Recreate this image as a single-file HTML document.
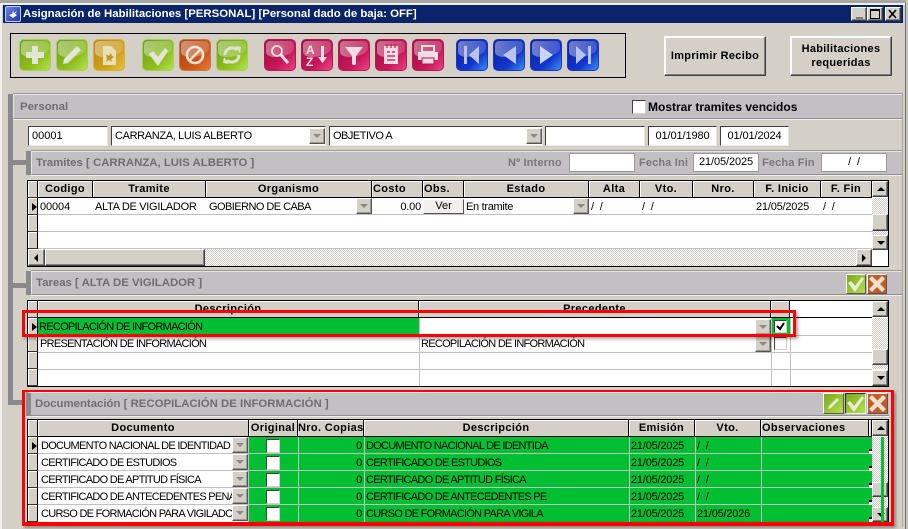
<!DOCTYPE html>
<html><head><meta charset="utf-8"><style>
html,body{margin:0;padding:0}
body{width:908px;height:529px;position:relative;overflow:hidden;background:#d4d0c8;font-family:"Liberation Sans",sans-serif;font-size:11px;color:#000}
div,span,svg{position:absolute;box-sizing:border-box}
.t{white-space:nowrap;line-height:16px;height:16px}
.grid .t{line-height:18px;height:18px;letter-spacing:-.72px}
.grid .d{letter-spacing:-.2px;word-spacing:3px}
.ib{width:32px;height:32px;border-radius:5px;border:1px solid;overflow:hidden;top:39px}
.ib:before{content:"";position:absolute;left:1px;top:1px;right:1px;height:16px;border-radius:4px 4px 70% 30%/4px 4px 9px 5px;background:linear-gradient(100deg,rgba(255,255,255,.42),rgba(255,255,255,.16))}
.ib svg{left:-1px;top:-1px;width:32px;height:32px}
.g{background:linear-gradient(135deg,#6f9c16,#8fc020 65%,#b6e24e);border-color:#a6d050}
.y{background:linear-gradient(135deg,#b8860f,#cfa21a 65%,#e6c640);border-color:#d8b040}
.o{background:linear-gradient(135deg,#a84414,#cf5618 65%,#ea7a38);border-color:#c87848}
.p{background:linear-gradient(135deg,#a00a40,#c8185a 65%,#ee4488);border-color:#b81850}
.b{background:linear-gradient(135deg,#0a1ea0,#1236cc 65%,#3a92f2);border-color:#1838c0}
.btn{background:#d4d0c8;border:1px solid;border-color:#fff #404040 #404040 #fff;box-shadow:inset -1px -1px 0 #808080,inset 1px 1px 0 #fff;font-weight:bold;text-align:center;font-size:11px;letter-spacing:.3px}
.hd{background:#c3c0c3;border-top:1px solid #e8e6e2;border-left:1px solid #e8e6e2;border-bottom:1px solid #8f8f8f;box-shadow:0 -1px 0 #9a9a9a,0 1px 0 #f0eeea}
.lb{font-weight:bold;color:#6e6e6e;font-size:11.4px;line-height:16px;white-space:nowrap}
.lb2{font-weight:bold;color:#777;font-size:11px;line-height:16px;white-space:nowrap;letter-spacing:.15px}
.in{background:#fff;border:1px solid;border-color:#404040 #e8e6e2 #e8e6e2 #404040;height:20px;top:126px;line-height:18px;white-space:nowrap;padding-left:3px;font-size:11px;overflow:hidden}
.in2{background:#fff;border:1px solid #999;height:19px;top:153px;line-height:17px;text-align:center;font-size:11px;letter-spacing:-.1px}
.dd{width:16px;height:16px;background:#d4d0c8;border:1px solid;border-color:#fff #555 #555 #fff;box-shadow:inset -1px -1px 0 #999}
.dd:after{content:"";position:absolute;left:3px;top:5px;border-left:4px solid transparent;border-right:4px solid transparent;border-top:4px solid #8a8a8a}
.grid{background:#fff;border:1px solid #000;left:27px;width:862px}
.hc{background:#d4d0c8;border-right:1px solid #000;border-bottom:1px solid #000;box-shadow:inset 1px 1px 0 #fff;font-weight:bold;text-align:center;line-height:16px;height:17px;top:0;letter-spacing:.35px;white-space:nowrap;overflow:hidden}
.ind{background:#d4d0c8;left:0;width:10px;border-right:1px solid #000;border-bottom:1px solid #333;box-shadow:inset 1px 1px 0 #fff;height:17px}
.arr{border-left:5px solid #000;border-top:4px solid transparent;border-bottom:4px solid transparent;left:4px;top:5px;width:0;height:0}
.rl{left:10px;height:1px;background:#c0c0c0}
.vl{width:1px;background:#c0c0c0}
.sb{background:#d4d0c8;border:1px solid;border-color:#fff #404040 #404040 #fff;box-shadow:inset -1px -1px 0 #808080}
.dth{background:repeating-conic-gradient(#cfcbc3 0 25%,#fff 0 50%) 0 0/2px 2px}
.up:after{content:"";position:absolute;left:4px;top:5px;border-left:4px solid transparent;border-right:4px solid transparent;border-bottom:4px solid #000}
.dn:after{content:"";position:absolute;left:4px;top:5px;border-left:4px solid transparent;border-right:4px solid transparent;border-top:4px solid #000}
.cb{width:14px;height:14px;background:#fff;border:1px solid;border-color:#404040 #d4d0c8 #d4d0c8 #404040}
.red{border:3px solid #f00;box-shadow:2px 2px 3px rgba(0,0,0,.35)}
.gr{background:#00bf33}
.sm{width:20px;height:20px;border:1px solid;border-color:#fff #555 #555 #fff;overflow:hidden}
</style></head><body>

<!-- window frame -->
<div style="left:0;top:0;width:908px;height:3px;background:#a8a6a0"></div>
<div style="left:0;top:3px;width:908px;height:2px;background:#f2f0ec"></div>
<div style="left:0;top:3px;width:2px;height:526px;background:#f2f0ec"></div>
<div style="left:905px;top:3px;width:1px;height:526px;background:#6e6e6e"></div>
<div style="left:906px;top:0;width:2px;height:529px;background:#c8c6c0"></div>

<!-- title bar -->
<div style="left:3px;top:5px;width:900px;height:18px;background:#0a246a"></div>
<div style="left:5px;top:6px;width:16px;height:16px;background:linear-gradient(135deg,#6a88e0,#1c34b8);border:1px solid #c8d0f0;border-radius:2px">
<svg width="14" height="14" viewBox="0 0 14 14" style="left:0;top:0"><path d="M3 8l4 3 4-3-2-1 2-3-3 2-1-2-1 3z" fill="#fff"/></svg></div>
<div class="t" style="left:23px;top:6px;color:#fff;font-weight:bold;font-size:11.4px">Asignación de Habilitaciones [PERSONAL] [Personal dado de baja: OFF]</div>
<div class="sb" style="left:851px;top:7px;width:16px;height:14px"><div style="left:4px;top:9px;width:7px;height:2px;background:#808080"></div></div>
<div class="sb" style="left:867px;top:7px;width:16px;height:14px"><div style="left:2px;top:1px;width:10px;height:10px;border:1px solid #000;border-top-width:2px"></div></div>
<div class="sb" style="left:885px;top:7px;width:16px;height:14px"><svg width="14" height="12" style="left:0;top:0"><path d="M3 2l7 8M10 2l-7 8" stroke="#000" stroke-width="1.6"/></svg></div>

<!-- toolbar -->
<div style="left:10px;top:33px;width:616px;height:45px;border:1px solid #000"></div>

<div class="ib g" style="left:19px"><svg viewBox="0 0 32 32"><path d="M13 7h6v6h6v6h-6v6h-6v-6H7v-6h6z" fill="#e2e6d6"/></svg></div>
<div class="ib g" style="left:56px"><svg viewBox="0 0 32 32"><path d="M21 7l4 4-13 13-5 1 1-5z" fill="#e2e6d6"/></svg></div>
<div class="ib y" style="left:93px"><svg viewBox="0 0 32 32"><path d="M10 7h8l5 5v14H10z" fill="#e8e0b8"/><path d="M13 15l3 2 2-3 1 3 2 1-3 2 1 3-3-2-3 2 1-3z" fill="#c8961e"/></svg></div>

<div class="ib g" style="left:142px"><svg viewBox="0 0 32 32"><path d="M7 15l4-3 5 6 7-9 3 3-10 15z" fill="#e2e6d6"/></svg></div>
<div class="ib o" style="left:179px"><svg viewBox="0 0 32 32"><circle cx="16" cy="16" r="8" fill="none" stroke="#ece2d4" stroke-width="2.6"/><path d="M11 21l10-10" stroke="#ece2d4" stroke-width="2.6"/></svg></div>
<div class="ib g" style="left:216px"><svg viewBox="0 0 32 32"><path d="M9 16a7 7 0 0 1 12-5" fill="none" stroke="#dfe4d0" stroke-width="3"/><path d="M23 16a7 7 0 0 1-12 5" fill="none" stroke="#dfe4d0" stroke-width="3"/><path d="M19 7l6 1-1 6zM13 25l-6-1 1-6z" fill="#dfe4d0"/></svg></div>

<div class="ib p" style="left:264px"><svg viewBox="0 0 32 32"><circle cx="13" cy="12" r="5" fill="none" stroke="#f0e0e6" stroke-width="1.8"/><path d="M17 16l7 8" stroke="#f0e0e6" stroke-width="3"/></svg></div>
<div class="ib p" style="left:301px"><svg viewBox="0 0 32 32"><text x="5" y="15" font-family="Liberation Sans" font-weight="bold" font-size="12" fill="#f0e0e6">A</text><text x="5" y="27" font-family="Liberation Sans" font-weight="bold" font-size="12" fill="#f0e0e6">Z</text><path d="M20 7h3v11h3l-4.500 6-4.500-6h3z" fill="#f0e0e6"/></svg></div>
<div class="ib p" style="left:338px"><svg viewBox="0 0 32 32"><path d="M7 8h18l-7 9v8l-1 1h-2l-1-1v-8z" fill="#f0dce4"/></svg></div>
<div class="ib p" style="left:375px"><svg viewBox="0 0 32 32"><path d="M9 7h14v18H9z" fill="#f0dce4"/><path d="M12 5v4M16 5v4M20 5v4M12 13h3M17 13h3M12 17h8M12 21h8" stroke="#c01450" stroke-width="1.200"/></svg></div>
<div class="ib p" style="left:412px"><svg viewBox="0 0 32 32"><path d="M10 7h12v6H10z" fill="none" stroke="#f0dce4" stroke-width="2"/><path d="M6 13h20v8H6z" fill="#f0dce4"/><path d="M10 19h12v6H10z" fill="#f0dce4" stroke="#c01450"/></svg></div>

<div class="ib b" style="left:456px"><svg viewBox="0 0 32 32"><path d="M8 7h3v18H8z" fill="#b8c4e8"/><path d="M23 7v18L13 16z" fill="#b8c4e8"/></svg></div>
<div class="ib b" style="left:493px"><svg viewBox="0 0 32 32"><path d="M23 7v18L10 16z" fill="#b8c4e8"/></svg></div>
<div class="ib b" style="left:530px"><svg viewBox="0 0 32 32"><path d="M10 7v18l13-9z" fill="#c8d4f0"/></svg></div>
<div class="ib b" style="left:567px"><svg viewBox="0 0 32 32"><path d="M9 7v18l10-9z" fill="#b8c4e8"/><path d="M21 7h3v18h-3z" fill="#b8c4e8"/></svg></div>

<!-- top buttons -->
<div class="btn" style="left:664px;top:36px;width:102px;height:40px;line-height:38px">Imprimir Recibo</div>
<div class="btn" style="left:790px;top:36px;width:102px;height:40px;line-height:14px;padding-top:5px">Habilitaciones<br>requeridas</div>

<!-- left tree bars -->
<div style="left:8px;top:94px;width:5px;height:311px;background:#8a8a8a"></div>
<div style="left:13px;top:160px;width:18px;height:5px;background:#8a8a8a"></div>
<div style="left:13px;top:283px;width:18px;height:5px;background:#8a8a8a"></div>
<div style="left:8px;top:400px;width:16px;height:5px;background:#8a8a8a"></div>
<div style="left:902px;top:93px;width:1px;height:434px;background:#a8a6a0"></div>

<!-- Personal -->
<div class="hd" style="left:13px;top:94px;width:889px;height:25px"></div>
<div class="lb" style="left:20px;top:99px">Personal</div>
<div class="cb" style="left:632px;top:100px"></div>
<div class="t" style="left:648px;top:99px;font-weight:bold;font-size:12px">Mostrar tramites vencidos</div>

<div class="in" style="left:28px;width:80px">00001</div>
<div class="in" style="left:111px;width:215px;letter-spacing:-.35px">CARRANZA, LUIS ALBERTO</div>
<div class="dd" style="left:309px;top:128px"></div>
<div class="in" style="left:329px;width:214px;letter-spacing:-.5px">OBJETIVO A</div>
<div class="dd" style="left:526px;top:128px"></div>
<div class="in" style="left:545px;width:100px"></div>
<div class="in" style="left:648px;width:69px;text-align:center;padding:0;letter-spacing:-.1px">01/01/1980</div>
<div class="in" style="left:720px;width:69px;text-align:center;padding:0;letter-spacing:-.1px">01/01/2024</div>

<!-- Tramites -->
<div style="left:26px;top:151px;width:5px;height:24px;background:#8a8a8a"></div>
<div class="hd" style="left:31px;top:151px;width:871px;height:24px"></div>
<div class="lb" style="left:36px;top:155px">Tramites [ CARRANZA, LUIS ALBERTO ]</div>
<div class="lb2" style="left:508px;top:155px">Nº Interno</div>
<div class="in2" style="left:569px;width:66px"></div>
<div class="lb2" style="left:639px;top:155px">Fecha Ini</div>
<div class="in2" style="left:693px;width:66px">21/05/2025</div>
<div class="lb2" style="left:762px;top:155px">Fecha Fin</div>
<div class="in2" style="left:821px;width:66px;word-spacing:3px">/ /</div>

<!-- Grid 1 -->
<div class="grid" style="top:180px;height:87px">
  <div class="ind" style="top:0"></div>
  <div class="hc" style="left:10px;width:55px">Codigo</div>
  <div class="hc" style="left:65px;width:113px">Tramite</div>
  <div class="hc" style="left:178px;width:166px">Organismo</div>
  <div class="hc" style="left:344px;width:51px;text-align:left;padding-left:1px">Costo</div>
  <div class="hc" style="left:395px;width:41px;text-align:left;padding-left:1px">Obs.</div>
  <div class="hc" style="left:436px;width:125px">Estado</div>
  <div class="hc" style="left:561px;width:51px">Alta</div>
  <div class="hc" style="left:612px;width:53px">Vto.</div>
  <div class="hc" style="left:665px;width:61px">Nro.</div>
  <div class="hc" style="left:726px;width:67px">F. Inicio</div>
  <div class="hc" style="left:793px;width:51px">F. Fin</div>
  <div class="ind" style="top:17px"><div class="arr"></div></div>
  <div class="ind" style="top:34px"></div>
  <div class="ind" style="top:51px"></div>
  <div class="rl" style="top:33px;width:834px"></div>
  <div class="rl" style="top:50px;width:834px"></div>
  <div class="rl" style="top:67px;width:834px"></div>
  <div class="t" style="left:12px;top:17px;letter-spacing:-.1px">00004</div>
  <div class="t" style="left:67px;top:17px;letter-spacing:-.3px">ALTA DE VIGILADOR</div>
  <div class="t" style="left:181px;top:17px;letter-spacing:-.55px">GOBIERNO DE CABA</div>
  <div class="dd" style="left:328px;top:17px"></div>
  <div class="t d" style="left:344px;top:17px;width:49px;text-align:right">0.00</div>
  <div class="sb" style="left:395px;top:18px;width:41px;height:15px;line-height:13px;text-align:center;box-shadow:none;background:#f2f0ec;border-color:#fff #555 #555 #fff">Ver</div>
  <div class="t" style="left:438px;top:17px;letter-spacing:-.3px">En tramite</div>
  <div class="dd" style="left:545px;top:17px"></div>
  <div class="t d" style="left:563px;top:17px">/ /</div>
  <div class="t d" style="left:614px;top:17px">/ /</div>
  <div class="t d" style="left:728px;top:17px">21/05/2025</div>
  <div class="t d" style="left:795px;top:17px">/ /</div>
  <div class="dth" style="left:0;top:68px;width:860px;height:17px"></div>
  <div class="sb" style="left:0;top:68px;width:17px;height:17px"><div style="left:5px;top:4px;border-right:4px solid #000;border-top:4px solid transparent;border-bottom:4px solid transparent"></div></div>
  <div class="sb" style="left:17px;top:68px;width:160px;height:17px"></div>
  <div class="sb" style="left:828px;top:68px;width:16px;height:17px"><div style="left:5px;top:4px;border-left:4px solid #000;border-top:4px solid transparent;border-bottom:4px solid transparent"></div></div>
  <div class="dth" style="left:844px;top:17px;width:16px;height:51px"></div>
  <div class="sb up" style="left:844px;top:0;width:16px;height:16px"></div>
  <div class="sb" style="left:844px;top:33px;width:16px;height:17px"></div>
  <div class="sb dn" style="left:844px;top:54px;width:16px;height:15px"></div>
  <div style="left:844px;top:69px;width:16px;height:16px;background:#fff"></div>
</div>

<!-- Tareas -->
<div style="left:26px;top:271px;width:5px;height:24px;background:#8a8a8a"></div>
<div class="hd" style="left:31px;top:271px;width:871px;height:24px"></div>
<div class="lb" style="left:36px;top:275px">Tareas [ ALTA DE VIGILADOR ]</div>
<div class="sm" style="left:846px;top:274px;background:linear-gradient(135deg,#7aa81c,#b8e048)"><svg width="18" height="18" viewBox="0 0 18 18" style="left:0;top:0"><path d="M1 8l3-2 4 5 7-9 2 2-9 13z" fill="#e6ecd8"/></svg></div>
<div class="sm" style="left:867px;top:274px;background:#c85a20"><svg width="18" height="18" viewBox="0 0 18 18" style="left:0;top:0"><path d="M4 1l5 5 5-5 3 3-5 5 5 5-3 3-5-5-5 5-3-3 5-5-5-5z" fill="#ece0d4"/></svg></div>

<!-- Grid 2 -->
<div class="grid" style="top:300px;height:87px">
  <div class="ind" style="top:0"></div>
  <div class="hc" style="left:10px;width:381px">Descripción</div>
  <div class="hc" style="left:391px;width:352px">Precedente</div>
  <div class="hc" style="left:743px;width:19px"></div>
  <div class="ind" style="top:17px"><div class="arr"></div></div>
  <div class="ind" style="top:34px"></div>
  <div class="ind" style="top:51px"></div>
  <div class="ind" style="top:68px;height:17px"></div>
  <div style="left:10px;top:16px;width:834px;height:1px;background:#000"></div>
  <div class="gr" style="left:10px;top:17px;width:381px;height:17px"></div>
  <div class="rl" style="top:34px;width:834px"></div>
  <div class="rl" style="top:51px;width:834px"></div>
  <div class="rl" style="top:68px;width:834px"></div>
  <div class="vl" style="left:391px;top:17px;height:68px"></div>
  <div class="vl" style="left:743px;top:17px;height:68px"></div>
  <div class="vl" style="left:762px;top:17px;height:68px"></div>
  <div class="t" style="left:11px;top:17px">RECOPILACIÓN DE INFORMACIÓN</div>
  <div class="t" style="left:12px;top:34px">PRESENTACIÓN DE INFORMACIÓN</div>
  <div class="t" style="left:393px;top:34px">RECOPILACIÓN DE INFORMACIÓN</div>
  <div class="dd" style="left:727px;top:18px"></div>
  <div class="dd" style="left:727px;top:35px"></div>
  <div class="gr" style="left:744px;top:17px;width:18px;height:17px"></div>
  <div class="cb" style="left:746px;top:19px;width:13px;height:13px"><svg width="11" height="11" viewBox="0 0 11 11" style="left:0;top:0"><path d="M2 5l3 3 4-6" fill="none" stroke="#000" stroke-width="2"/></svg></div>
  <div class="cb" style="left:746px;top:36px;width:13px;height:13px"></div>
  <div class="dth" style="left:844px;top:17px;width:16px;height:51px"></div>
  <div class="sb up" style="left:844px;top:0;width:16px;height:16px"></div>
  <div class="sb" style="left:844px;top:48px;width:16px;height:16px"></div>
  <div class="sb dn" style="left:844px;top:69px;width:16px;height:16px"></div>
</div>

<!-- Documentación -->
<div class="hd" style="left:26px;top:392px;width:863px;height:24px;border-left:5px solid #8a8a8a"></div>
<div class="lb" style="left:35px;top:396px">Documentación [ RECOPILACIÓN DE INFORMACIÓN ]</div>
<div class="sm" style="left:823px;top:393px;width:21px;height:21px;background:linear-gradient(135deg,#7aa81c,#b8e048)"><svg width="19" height="19" viewBox="0 0 19 19" style="left:0;top:0"><path d="M13 4l2 2-8 8-3 1 1-3z" fill="#e6ecd8"/></svg></div>
<div class="sm" style="left:845px;top:393px;width:21px;height:21px;border-color:#333 #eee #eee #333;background:linear-gradient(135deg,#7aa81c,#b8e048)"><svg width="19" height="19" viewBox="0 0 19 19" style="left:0;top:0"><path d="M1 9l3-2 4 5 8-10 2 2-10 14z" fill="#e6ecd8"/></svg></div>
<div class="sm" style="left:867px;top:393px;width:21px;height:21px;background:#c85a20"><svg width="19" height="19" viewBox="0 0 19 19" style="left:0;top:0"><path d="M4 1l5.500 5.500L15 1l3 3-5.500 5.500L18 15l-3 3-5.500-5.500L4 18l-3-3 5.500-5.500L1 4z" fill="#ece0d4"/></svg></div>

<!-- Grid 3 -->
<div class="grid" style="top:419px;height:104px">
  <div class="ind" style="top:0"></div>
  <div class="hc" style="left:10px;width:211px">Documento</div>
  <div class="hc" style="left:221px;width:49px">Original</div>
  <div class="hc" style="left:270px;width:66px">Nro. Copias</div>
  <div class="hc" style="left:336px;width:265px">Descripción</div>
  <div class="hc" style="left:601px;width:66px">Emisión</div>
  <div class="hc" style="left:667px;width:66px">Vto.</div>
  <div class="hc" style="left:733px;width:108px;text-align:left;padding-left:1px">Observaciones</div>
  <div class="hc" style="left:841px;width:3px"></div>
  <div class="ind" style="top:17px"><div class="arr"></div></div>
  <div class="ind" style="top:34px"></div>
  <div class="ind" style="top:51px"></div>
  <div class="ind" style="top:68px"></div>
  <div class="ind" style="top:85px"></div>
  <div class="gr" style="left:221px;top:17px;width:623px;height:85px"></div>
  <div class="rl" style="top:33px;width:834px"></div>
  <div class="rl" style="top:50px;width:834px"></div>
  <div class="rl" style="top:67px;width:834px"></div>
  <div class="rl" style="top:84px;width:834px"></div>
  <div class="vl" style="left:220px;top:17px;height:85px"></div>
  <div class="vl" style="left:270px;top:17px;height:85px"></div>
  <div class="vl" style="left:336px;top:17px;height:85px"></div>
  <div class="vl" style="left:601px;top:17px;height:85px"></div>
  <div class="vl" style="left:667px;top:17px;height:85px"></div>
  <div class="vl" style="left:733px;top:17px;height:85px"></div>
  <div class="t" style="left:13px;top:17px;width:191px;overflow:hidden">DOCUMENTO NACIONAL DE IDENTIDAD</div>
  <div class="t" style="left:13px;top:34px">CERTIFICADO DE ESTUDIOS</div>
  <div class="t" style="left:13px;top:51px">CERTIFICADO DE APTITUD FÍSICA</div>
  <div class="t" style="left:13px;top:68px;width:191px;overflow:hidden">CERTIFICADO DE ANTECEDENTES PENALES</div>
  <div class="t" style="left:13px;top:85px;width:191px;overflow:hidden">CURSO DE FORMACIÓN PARA VIGILADOR</div>
  <div class="dd" style="left:204px;top:17px"></div>
  <div class="dd" style="left:204px;top:34px"></div>
  <div class="dd" style="left:204px;top:51px"></div>
  <div class="dd" style="left:204px;top:68px"></div>
  <div class="dd" style="left:204px;top:85px"></div>
  <div class="cb" style="left:238px;top:19px"></div>
  <div class="cb" style="left:238px;top:36px"></div>
  <div class="cb" style="left:238px;top:53px"></div>
  <div class="cb" style="left:238px;top:70px"></div>
  <div class="cb" style="left:238px;top:87px"></div>
  <div class="t d" style="left:270px;top:17px;width:64px;text-align:right">0</div>
  <div class="t d" style="left:270px;top:34px;width:64px;text-align:right">0</div>
  <div class="t d" style="left:270px;top:51px;width:64px;text-align:right">0</div>
  <div class="t d" style="left:270px;top:68px;width:64px;text-align:right">0</div>
  <div class="t d" style="left:270px;top:85px;width:64px;text-align:right">0</div>
  <div class="t" style="left:338px;top:17px">DOCUMENTO NACIONAL DE IDENTIDA</div>
  <div class="t" style="left:338px;top:34px">CERTIFICADO DE ESTUDIOS</div>
  <div class="t" style="left:338px;top:51px">CERTIFICADO DE APTITUD FÍSICA</div>
  <div class="t" style="left:338px;top:68px">CERTIFICADO DE ANTECEDENTES PE</div>
  <div class="t" style="left:338px;top:85px">CURSO DE FORMACIÓN PARA VIGILA</div>
  <div class="t d" style="left:603px;top:17px">21/05/2025</div>
  <div class="t d" style="left:603px;top:34px">21/05/2025</div>
  <div class="t d" style="left:603px;top:51px">21/05/2025</div>
  <div class="t d" style="left:603px;top:68px">21/05/2025</div>
  <div class="t d" style="left:603px;top:85px">21/05/2025</div>
  <div class="t d" style="left:669px;top:17px">/ /</div>
  <div class="t d" style="left:669px;top:34px">/ /</div>
  <div class="t d" style="left:669px;top:51px">/ /</div>
  <div class="t d" style="left:669px;top:68px">/ /</div>
  <div class="t d" style="left:669px;top:85px">21/05/2026</div>
  <div class="dth" style="left:844px;top:17px;width:16px;height:85px"></div>
  <div class="sb up" style="left:844px;top:0;width:16px;height:16px"></div>
  <div class="sb" style="left:844px;top:62px;width:16px;height:15px"></div>
  <div class="sb dn" style="left:844px;top:87px;width:16px;height:15px"></div>
  <div class="gr" style="left:853px;top:17px;width:3px;height:85px"></div>
  <div style="left:841px;top:17px;width:3px;height:85px;background:repeating-linear-gradient(#00bf33 0 12px,#000 12px 14px,#fff 14px 17px)"></div>
</div>

<!-- red highlight boxes -->
<div class="red" style="left:22px;top:310px;width:774px;height:27px"></div>
<div class="red" style="left:22px;top:390px;width:872px;height:136px;border-top-width:2px;border-bottom-width:4px"></div>

</body></html>
